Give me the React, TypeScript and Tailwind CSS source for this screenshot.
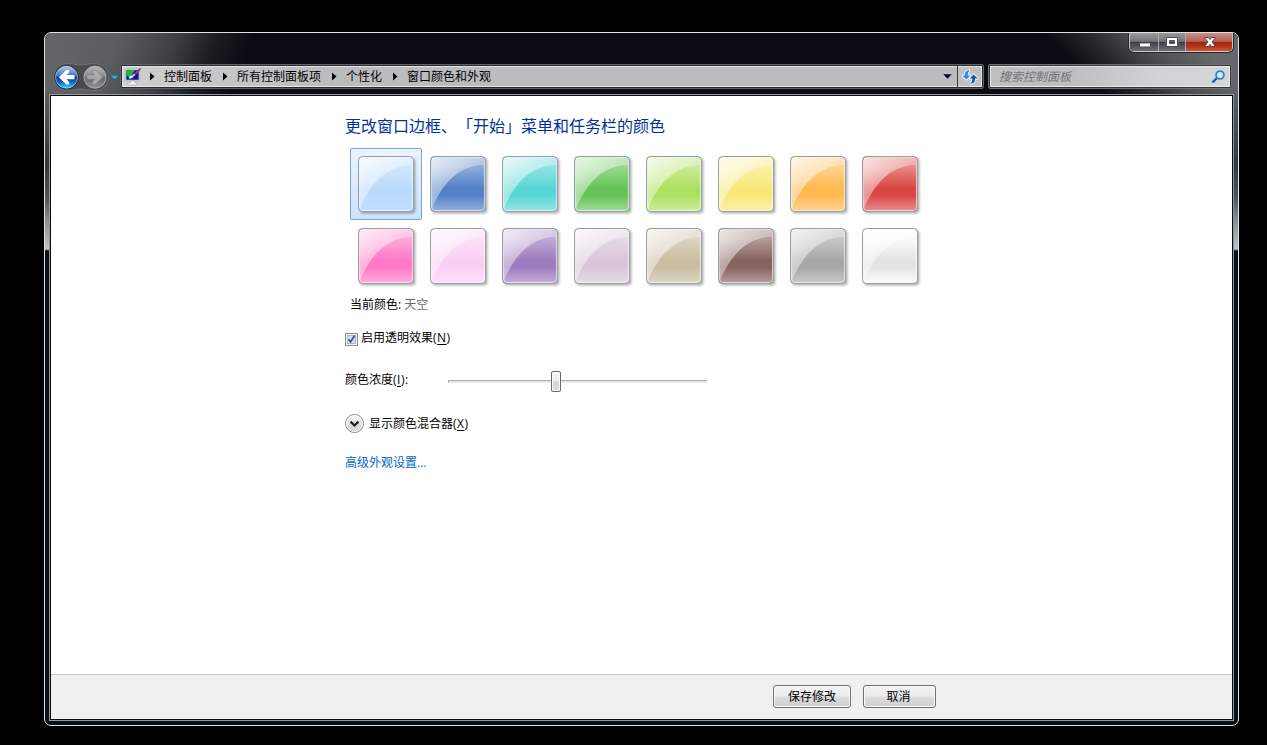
import React from "react";

const SWATCHES: { name: string; color: string }[] = [
  { name: "sky", color: "#badafd" },
  { name: "twilight", color: "#5280c5" },
  { name: "sea", color: "#56d6d4" },
  { name: "leaf", color: "#64c455" },
  { name: "lime", color: "#ade05f" },
  { name: "sun", color: "#f9e878" },
  { name: "pumpkin", color: "#ffba50" },
  { name: "ruby", color: "#da4644" },
  { name: "fuchsia", color: "#ff78c6" },
  { name: "blush", color: "#fbcff5" },
  { name: "violet", color: "#9e7bbf" },
  { name: "lavender", color: "#d7c5d8" },
  { name: "taupe", color: "#c9bea1" },
  { name: "chocolate", color: "#88625f" },
  { name: "slate", color: "#a7a7a7" },
  { name: "frost", color: "#e4e4e4" },
];

function Swatch({ name, color, selected }: { name: string; color: string; selected: boolean }) {
  const edge = name === "frost" ? 0.95 : 0.4;
  const bottom = name === "frost" ? 0.9 : name === "sky" ? 0.12 : 0.38;
  return (
    <div
      className={
        selected
          ? "flex size-[72px] items-start justify-start rounded-[2px] border border-[#7da2dc] bg-gradient-to-b from-[#ecf4fe] to-[#cde2fd] p-[7px]"
          : "flex size-[72px] items-start justify-start p-2"
      }
    >
      <svg width="56" height="56" viewBox="0 0 56 56" className="overflow-visible">
        <defs>
          <linearGradient id={`body-${name}`} x1="0" y1="0" x2="0" y2="1">
            <stop offset="0" stopColor="#fff" stopOpacity={edge} />
            <stop offset="0.2" stopColor="#fff" stopOpacity={edge * 0.85} />
            <stop offset="0.58" stopColor="#fff" stopOpacity="0" />
            <stop offset="0.7" stopColor="#fff" stopOpacity="0" />
            <stop offset="1" stopColor="#fff" stopOpacity={bottom} />
          </linearGradient>
          <linearGradient id={`gloss-${name}`} x1="0" y1="0" x2="0.6" y2="0.6">
            <stop offset="0" stopColor="#fff" stopOpacity="0.75" />
            <stop offset="1" stopColor="#fff" stopOpacity="0.27" />
          </linearGradient>
          <filter id={`soft-${name}`} x="-20%" y="-20%" width="140%" height="140%">
            <feGaussianBlur stdDeviation="1.2" />
          </filter>
        </defs>
        <rect x="2" y="2" width="55.5" height="55.5" rx="4" fill="#000" fillOpacity="0.3" filter={`url(#soft-${name})`} />
        <rect x="0.5" y="0.5" width="55" height="55" rx="4" fill={color} />
        <rect x="1" y="1" width="54" height="54" rx="3.5" fill={`url(#body-${name})`} />
        <path d="M2 2H54V9C31 9 14 25 3 50L2 54Z" fill={`url(#gloss-${name})`} />
        <rect x="1.5" y="1.5" width="53" height="53" rx="3" fill="none" stroke="#fff" strokeOpacity="0.65" />
        <rect x="0.5" y="0.5" width="55" height="55" rx="4" fill="none" stroke="#999ca1" />
      </svg>
    </div>
  );
}

function NavButtons() {
  return (
    <svg width="67" height="30" viewBox="0 0 67 30" className="mt-[1px] shrink-0 overflow-visible">
      <defs>
        <linearGradient id="backTop" x1="0" y1="0" x2="0" y2="1">
          <stop offset="0" stopColor="#b9cdea" />
          <stop offset="0.44" stopColor="#3f72c0" />
          <stop offset="0.5" stopColor="#0b3a91" />
          <stop offset="0.72" stopColor="#0966c4" />
          <stop offset="1" stopColor="#38d4fb" />
        </linearGradient>
        <linearGradient id="forwardFill" x1="0" y1="0" x2="0" y2="1">
          <stop offset="0" stopColor="#b5b7b9" />
          <stop offset="0.48" stopColor="#85888a" />
          <stop offset="0.5" stopColor="#65686b" />
          <stop offset="1" stopColor="#909395" />
        </linearGradient>
      </defs>
      <path
        d="M14 1.5C20 1.5 22 3 28 3S36 1.5 42 1.5A13.2 13.2 0 0 1 42 28.5C36 28.5 34 27 28 27S20 28.5 14 28.5A13.2 13.2 0 0 1 14 1.5Z"
        fill="#3a3d41"
        fillOpacity="0.6"
        stroke="#7c8084"
        strokeOpacity="0.6"
      />
      <circle cx="13.5" cy="15.2" r="12" fill="#1d2b47" />
      <circle cx="13.5" cy="15.2" r="11" fill="url(#backTop)" stroke="#b8cdec" strokeOpacity="0.7" />
      <path d="M13.2 8L5.8 15.2L13.2 22.4H16.2V20L13.4 17.3H21.5V13.1H13.4L16.2 10.4V8Z" fill="#fff" />
      <circle cx="42" cy="15.2" r="12" fill="#54575a" />
      <circle cx="42" cy="15.2" r="11" fill="url(#forwardFill)" stroke="#bec0c2" strokeOpacity="0.75" />
      <path
        d="M42.3 8L49.7 15.2L42.3 22.4H39.3V20L42.1 17.3H34V13.1H42.1L39.3 10.4V8Z"
        fill="#b4b6b8"
        fillOpacity="0.8"
        stroke="#77797b"
        strokeWidth="0.5"
      />
      <path d="M56.7 13H66.3L61.5 18Z" fill="#0b3f6d" />
      <path d="M57.2 13.5H65.8L61.5 17.6Z" fill="#35a6ea" />
    </svg>
  );
}

function PersonalizeIcon() {
  return (
    <svg width="16" height="18" viewBox="0 0 16 18" className="-ml-px shrink-0 overflow-visible">
      <rect x="0.3" y="1.2" width="14.4" height="11.6" rx="0.5" fill="#eceef0" stroke="#95989b" strokeWidth="0.6" />
      <rect x="1.3" y="2.2" width="12.4" height="9.6" fill="#0a12b0" />
      <path d="M1.3 2.2H10L6 8L4 10L1.3 6.5Z" fill="#17c22c" />
      <path d="M4 10.7C4.3 8 6.3 7.2 8.2 7.8C8 10 6 10.9 4 10.7Z" fill="#f5f5ff" />
      <path d="M7.5 8.5L14.5 1.8" stroke="#e02a35" strokeWidth="1.8" />
      <path d="M6.5 9L9.5 6.2" stroke="#eef" strokeWidth="1.3" />
      <path d="M13 3.1L15.7 0.4" stroke="#2d56e0" strokeWidth="1.4" />
      <path d="M5.5 13H9.5V14.7H12V17H3V14.7H5.5Z" fill="#f3f4f4" stroke="#95989b" strokeWidth="0.5" />
    </svg>
  );
}

function Crumb({ children }: { children: React.ReactNode }) {
  return (
    <>
      <svg width="25" height="9" viewBox="0 0 25 9" className="shrink-0">
        <path d="M11 0.5L15.5 4.5L11 8.5Z" fill="#000" />
      </svg>
      <span className="shrink-0 whitespace-nowrap">{children}</span>
    </>
  );
}

function RefreshIcon() {
  return (
    <svg width="18" height="16" viewBox="0 0 18 16" className="ml-px">
      <g stroke="#f0f6ff" strokeWidth="1.8" strokeLinejoin="round">
        <path d="M8.2 1.2C5 1.2 3.9 3.2 3.9 6.4H1.2L5.4 10.6L9.4 6.4H6.8C6.7 4.4 6.9 3 8.2 2.2Z" fill="#2e8ede" />
        <path d="M9.8 14.8C13 14.8 14.1 12.8 14.1 9.6H16.8L12.6 5.4L8.6 9.6H11.2C11.3 11.6 11.1 13 9.8 13.8Z" fill="#1c57a8" />
      </g>
      <path d="M8.2 1.2C5 1.2 3.9 3.2 3.9 6.4H1.2L5.4 10.6L9.4 6.4H6.8C6.7 4.4 6.9 3 8.2 2.2Z" fill="#2e8ede" />
      <path d="M9.8 14.8C13 14.8 14.1 12.8 14.1 9.6H16.8L12.6 5.4L8.6 9.6H11.2C11.3 11.6 11.1 13 9.8 13.8Z" fill="#1c57a8" />
    </svg>
  );
}

function CaptionButtons() {
  return (
    <div className="flex h-[19px] w-[104px] overflow-hidden rounded-b-[5px] border border-t-0 border-[#c6c7c9] bg-[#24262a] shadow-[0_0_0_1px_#25272b]">
      <div className="flex w-[29px] items-center justify-center border-r border-[#aaabad] bg-[linear-gradient(#9b9c9f_0%,#737579_46%,#3c3f45_52%,#6f7279_100%)] pl-[2px]">
        <svg width="14" height="14" viewBox="0 0 14 14">
          <rect x="1.5" y="8" width="11" height="4" rx="0.5" fill="#fff" stroke="#4c4f5f" />
        </svg>
      </div>
      <div className="flex w-[27px] items-center justify-center border-r border-[#aaabad] bg-[linear-gradient(#98999c_0%,#727478_46%,#3c3f45_52%,#6f7279_100%)]">
        <svg width="14" height="14" viewBox="0 0 14 14">
          <path fillRule="evenodd" d="M1.5 2.5H12.5V11.5H1.5ZM4.5 5.5V8.5H9.5V5.5Z" fill="#fff" stroke="#4c4f5f" />
        </svg>
      </div>
      <div className="flex flex-1 items-center justify-center bg-[linear-gradient(#c98d84_0%,#b26558_46%,#9c2810_52%,#bb3517_78%,#cf5a3a_100%)] pl-[1px]">
        <svg width="14" height="14" viewBox="0 0 14 14">
          <path
            d="M1.5 2.5H5.3L7 4.6L8.7 2.5H12.5L9 7L12.5 11.5H8.7L7 9.4L5.3 11.5H1.5L5 7Z"
            fill="#fff"
            stroke="#57465a"
          />
        </svg>
      </div>
    </div>
  );
}

function AccessKey({ letter, suffix = "" }: { letter: string; suffix?: string }) {
  return (
    <span className="tracking-[0.5px]">
      (<u className="underline-offset-2">{letter}</u>){suffix}
    </span>
  );
}

export default function App() {
  return (
    <div className="h-[745px] w-[1267px] overflow-hidden bg-black pl-[44px] pt-[32px] text-[12px] leading-[24px] text-black [font-family:'Open_Sans','Noto_Sans_CJK_SC',sans-serif]">
      <div className="flex h-[694px] w-[1195px] flex-col overflow-hidden rounded-[7px] border border-[#dfe1e2] bg-[linear-gradient(to_bottom,#65686b_0px,#5b5e61_65px,#34373b_130px,#505357_165px,#85888a_185px,#c0c3c4_216px,#0a0f16_218px)]">
        <header className="flex h-[61px] shrink-0 flex-col bg-[linear-gradient(45deg,transparent_75px,#26282c_105px,#4a4d50_135px,#65676b_175px),linear-gradient(112deg,#64676a_0px,#5b5e61_70px,#3b3e42_125px,#1a1d22_160px,#090c13_195px,#090c13_100%)] bg-[position:right_top,left_top] bg-[size:240px_61px,100%_100%] bg-no-repeat">
          <div className="flex h-[31px] justify-end pr-[5px]">
            <CaptionButtons />
          </div>
          <div className="flex h-[25px] pl-[8px]">
            <div className="flex w-[67px] items-center">
              <NavButtons />
            </div>
            <div className="flex h-[25px] w-[864px] rounded-[2px] border border-[#606265] bg-[#292b2f] p-px">
              <div className="flex flex-1 items-center border border-[#e4e5e6] bg-[linear-gradient(90deg,#cfcfd0,#bbbcbe_25%,#bbbcbe)] pl-[3px]">
                <PersonalizeIcon />
                <div className="-ml-[2px] flex flex-1 items-center">
                  <Crumb>控制面板</Crumb>
                  <Crumb>所有控制面板项</Crumb>
                  <Crumb>个性化</Crumb>
                  <Crumb>窗口颜色和外观</Crumb>
                </div>
                <svg width="9" height="5" viewBox="0 0 9 5" className="mr-[5px]">
                  <path d="M0.3 0.2H8.7L4.5 4.7Z" fill="#05053c" />
                </svg>
              </div>
              <div className="flex w-[24px] items-center justify-center border border-l-0 border-[#e4e5e6] bg-[#bfc0c2] shadow-[-1px_0_0_#393b3e]">
                <RefreshIcon />
              </div>
            </div>
            <div className="ml-[4px] flex h-[25px] w-[244px] rounded-[2px] border border-[#6f7174] bg-[#34363a] p-px">
              <div className="flex flex-1 items-center justify-between border border-[#e7e8e9] bg-[linear-gradient(100deg,#bebfc0_0%,#bebfc0_35%,#d2d3d4_70%,#d5d6d7_100%)] pl-[8px] pr-[4px]">
                <span className="italic text-[#707274]">搜索控制面板</span>
                <svg width="14" height="14" viewBox="0 0 14 14">
                  <path d="M1.5 12.5L6 8" stroke="#1c4f9f" strokeWidth="2.2" />
                  <circle cx="9" cy="5" r="3.9" fill="#d8ecfa" stroke="#2c83d0" strokeWidth="1.8" />
                </svg>
              </div>
            </div>
          </div>
        </header>

        <div className="mx-[4px] flex h-[627px] shrink-0 flex-col border border-[#96989a]">
          <div className="flex flex-1 flex-col border border-[#090c13] bg-white">
            <main className="flex flex-1 flex-col items-start pl-[294px] pt-[18px]">
              <h1 className="h-[24px] text-[16px] leading-[24px] text-[#003399] [font-feature-settings:'chws'_0,'halt'_0] [text-spacing-trim:space-all]">
                更改窗口边框、「开始」菜单和任务栏的颜色
              </h1>
              <div className="ml-[5px] mt-[10px] grid grid-cols-8">
                {SWATCHES.map((s, i) => (
                  <Swatch key={s.name} name={s.name} color={s.color} selected={i === 0} />
                ))}
              </div>
              <p className="ml-[5px] mt-px h-[24px]">
                当前颜色: <span className="text-[#6d6d6d]">天空</span>
              </p>
              <label className="mt-[9px] flex h-[24px]">
                <span className="mt-[7px] flex size-[13px] items-center justify-center border border-[#8e8f8f] bg-[#f4f4f4]">
                  <svg width="11" height="11" viewBox="0 0 11 11">
                    <rect x="1.5" y="1.5" width="8" height="8" fill="#d9dde3" stroke="#b3b8bf" />
                    <path d="M2.6 5.2L4.6 8L8.6 1.6" fill="none" stroke="#3f57a0" strokeWidth="1.8" />
                  </svg>
                </span>
                <span className="ml-[3px]">
                  启用透明效果
                  <AccessKey letter="N" />
                </span>
              </label>
              <div className="mt-[18px] flex h-[24px]">
                <span className="w-[103px]">
                  颜色浓度
                  <AccessKey letter="I" suffix=":" />
                </span>
                <div className="mt-[12px] flex h-[3px] w-[259px] items-center border border-b-[#e7eaea] border-l-[#a7aaaa] border-r-[#d5d9d9] border-t-[#a6abab] bg-[#e7eaea]">
                  <div className="ml-[102px] h-[21px] w-[10px] shrink-0 rounded-[2px] border border-[#6b6b6b] bg-[linear-gradient(#f6f6f6_0%,#ececec_48%,#d4d4d4_52%,#dedede_100%)] shadow-[inset_0_0_0_1px_#fafafa]" />
                </div>
              </div>
              <div className="mt-[20px] flex h-[24px]">
                <svg width="19" height="19" viewBox="0 0 19 19" className="mt-[2px]">
                  <defs>
                    <linearGradient id="expander" x1="0" y1="0" x2="0" y2="1">
                      <stop offset="0" stopColor="#f6f6f6" />
                      <stop offset="1" stopColor="#cecece" />
                    </linearGradient>
                  </defs>
                  <circle cx="9.5" cy="9.5" r="9" fill="url(#expander)" stroke="#858585" />
                  <circle cx="9.5" cy="9.5" r="8" fill="none" stroke="#fbfbfb" />
                  <path d="M5.5 7.6L9.5 11.5L13.5 7.6" fill="none" stroke="#222" strokeWidth="2.3" />
                </svg>
                <span className="ml-[5px]">
                  显示颜色混合器
                  <AccessKey letter="X" />
                </span>
              </div>
              <a className="mt-[15px] h-[24px] text-[#0066cc]">高级外观设置...</a>
            </main>
            <footer className="flex h-[45px] shrink-0 gap-[12px] border-t border-[#c8c8c8] bg-[#f0f0f0] pl-[722px] pt-[10px]">
              <button className="h-[23px] w-[78px] rounded-[3px] border border-[#707070] bg-[linear-gradient(#f3f3f3_0%,#ebebeb_48%,#dddddd_52%,#cfcfcf_100%)] leading-[21px] shadow-[inset_0_0_0_1px_#fafafa]">
                保存修改
              </button>
              <button className="h-[23px] w-[73px] rounded-[3px] border border-[#707070] bg-[linear-gradient(#f3f3f3_0%,#ebebeb_48%,#dddddd_52%,#cfcfcf_100%)] pr-[2px] leading-[21px] shadow-[inset_0_0_0_1px_#fafafa]">
                取消
              </button>
            </footer>
          </div>
        </div>
      </div>
    </div>
  );
}
